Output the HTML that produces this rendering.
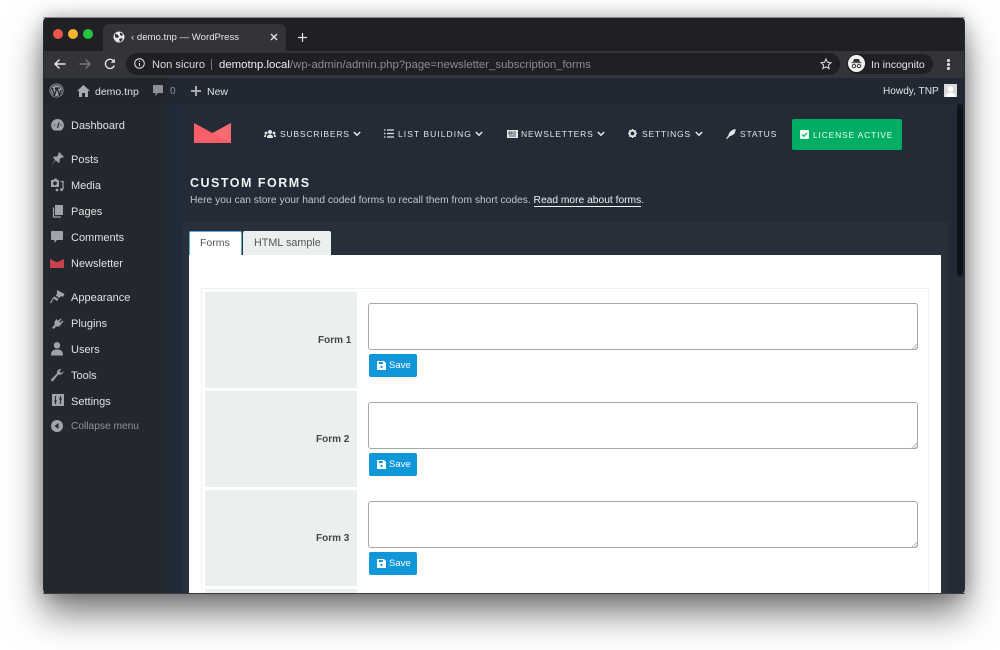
<!DOCTYPE html>
<html><head><meta charset="utf-8">
<style>
html,body{margin:0;padding:0;width:1000px;height:650px;overflow:hidden;background:#fff;font-family:"Liberation Sans",sans-serif}
body{filter:blur(.3px)}
.a,.t{position:absolute}
.t{white-space:nowrap;line-height:14px}
svg{position:absolute;overflow:visible}
#win{position:absolute;left:43px;top:17px;width:922px;height:577px;border-radius:5px;box-shadow:0 20px 36px rgba(0,0,0,.5),0 0 18px rgba(0,0,0,.25)}
#clip{position:absolute;left:43px;top:17px;width:922px;height:577px;border-radius:5px;overflow:hidden;background:#222b36}
.m{font-size:11px;color:#dfe1e3;left:71px}
.n{font-size:8.5px;letter-spacing:.8px;color:#e3e5e7;top:127px}
.f{font-size:10px;font-weight:bold;color:#444;}
.lab{left:205px;width:152px;height:96px;background:#ecefef}
.ta{left:368px;width:548px;height:45px;border:1px solid #a4a9ad;border-radius:3px;background:#fff}
.btn{left:369px;width:48px;height:23px;background:#0f97d9;border-radius:2px}
.sv{font-size:9.5px;color:#fff;left:389px}
</style></head><body>
<div id="win"></div>
<div id="clip"></div>
<div class="a" style="left:43px;top:17px;width:922px;height:1px;background:#8a8a8c;border-radius:5px 5px 0 0"></div>
<!-- tab strip -->
<div class="a" style="left:44px;top:18px;width:920px;height:33px;background:#1f2023;border-radius:4px 4px 0 0"></div>
<div class="a" style="left:103px;top:24px;width:183px;height:27px;background:#333437;border-radius:6px 6px 0 0"></div>
<div class="a" style="left:53px;top:29px;width:10px;height:10px;border-radius:50%;background:#f1544d"></div>
<div class="a" style="left:68px;top:29px;width:10px;height:10px;border-radius:50%;background:#f6b42c"></div>
<div class="a" style="left:83px;top:29px;width:10px;height:10px;border-radius:50%;background:#27c53f"></div>
<svg style="left:113px;top:31px" width="12" height="12" viewBox="0 0 12 12"><circle cx="6" cy="6" r="5.5" fill="#e6e6e6"/><path d="M2 2.5l3 1.5 1 2-2 1-2-1zM7 1.5l3 1.500-1 2-2-1zM6 8l3-1 .5 2-2.500 2z" fill="#333437"/></svg>
<div class="t" style="left:131px;top:31px;font-size:9.600px;color:#e6e6e6">‹ demo.tnp — WordPress</div>
<svg style="left:270px;top:33px" width="8" height="8" viewBox="0 0 8 8"><path d="M1 1l6 6M7 1l-6 6" stroke="#e6e6e6" stroke-width="1.300"/></svg>
<svg style="left:298px;top:33px" width="9" height="9" viewBox="0 0 9 9"><path d="M4.500 0v9M0 4.500h9" stroke="#e6e6e6" stroke-width="1.200"/></svg>
<!-- toolbar -->
<div class="a" style="left:44px;top:51px;width:920px;height:27px;background:#333437"></div>
<svg style="left:54px;top:58px" width="12" height="12" viewBox="0 0 12 12"><path d="M11.500 6H1M5.500 1.500L1 6l4.500 4.500" fill="none" stroke="#e8e8e8" stroke-width="1.400"/></svg>
<svg style="left:79px;top:58px" width="12" height="12" viewBox="0 0 12 12"><path d="M.5 6H11M6.500 1.500L11 6l-4.500 4.500" fill="none" stroke="#77787a" stroke-width="1.400"/></svg>
<svg style="left:104px;top:58px" width="12" height="12" viewBox="0 0 12 12"><path d="M10.300 7.500A4.600 4.600 0 1 1 9.600 3" fill="none" stroke="#e8e8e8" stroke-width="1.300"/><path d="M10.800 .8v4h-4z" fill="#e8e8e8"/></svg>
<div class="a" style="left:126px;top:53px;width:714px;height:22px;background:#1f2023;border-radius:11px"></div>
<svg style="left:134px;top:58px" width="11" height="11" viewBox="0 0 11 11"><circle cx="5.500" cy="5.500" r="4.800" fill="none" stroke="#e6e6e6"/><path d="M5.500 5v3M5.500 2.700v1.200" stroke="#e6e6e6"/></svg>
<div class="t" style="left:152px;top:58px;font-size:11.100px;color:#d8d8d8">Non sicuro</div>
<div class="a" style="left:211px;top:59px;width:1px;height:11px;background:#77787a"></div>
<div class="t" style="left:219px;top:58px;font-size:11.400px;color:#eee">demotnp.local<span style="color:#8b8c8e">/wp-admin/admin.php?page=newsletter_subscription_forms</span></div>
<svg style="left:820px;top:58px" width="12" height="12" viewBox="0 0 12 12"><path d="M6 1l1.500 3.300 3.500.4-2.600 2.400.7 3.500L6 8.800 2.900 10.600l.7-3.500L1 4.700l3.500-.4z" fill="none" stroke="#ddd" stroke-width="1"/></svg>
<div class="a" style="left:847px;top:54px;width:86px;height:20px;background:#1f2023;border-radius:10px"></div>
<div class="a" style="left:848px;top:55px;width:17px;height:17px;border-radius:50%;background:#f2f2f2"></div>
<svg style="left:851px;top:58px" width="11" height="11" viewBox="0 0 11 11"><path d="M3 1h5l1 3H2zM.5 4.300h10v.8H.5z" fill="#333"/><circle cx="3" cy="8" r="1.700" fill="none" stroke="#333"/><circle cx="8" cy="8" r="1.700" fill="none" stroke="#333"/></svg>
<div class="t" style="left:871px;top:58px;font-size:10.500px;color:#e6e6e6">In incognito</div>
<div class="a" style="left:947px;top:60px;width:2.500px;height:2.500px;border-radius:50%;background:#ddd;box-shadow:0 4px 0 #ddd,0 8px 0 #ddd;margin-top:-1px"></div>
<!-- admin bar -->
<div class="a" style="left:44px;top:78px;width:920px;height:26px;background:#22262c"></div>
<div class="a" style="left:167px;top:78px;width:797px;height:26px;background:#212833"></div>
<svg style="left:49px;top:83px" width="15" height="15" viewBox="0 0 15 15"><circle cx="7.500" cy="7.500" r="7" fill="#9da0a3"/><circle cx="7.500" cy="7.500" r="5.800" fill="none" stroke="#22262c" stroke-width=".8"/><path d="M3 5l2.500 7L7.300 7 6 5M6 5h5M8 5l2.500 7L12 7" fill="none" stroke="#22262c" stroke-width="1.300"/></svg>
<svg style="left:77px;top:85px" width="13" height="12" viewBox="0 0 13 12"><path d="M6.500 0L13 6h-2v6H8V8H5v4H2V6H0z" fill="#a8abae"/></svg>
<div class="t" style="left:95px;top:85px;font-size:10.500px;color:#dfe1e3">demo.tnp</div>
<svg style="left:152px;top:85px" width="12" height="12" viewBox="0 0 12 12"><path d="M1 0h10v8H6L3.500 11V8H1z" fill="#8f9295"/></svg>
<div class="t" style="left:170px;top:85px;font-size:10px;color:#8f9295">0</div>
<svg style="left:191px;top:86px" width="10" height="10" viewBox="0 0 10 10"><path d="M5 0v10M0 5h10" stroke="#a8abae" stroke-width="2"/></svg>
<div class="t" style="left:207px;top:85px;font-size:10.500px;color:#dfe1e3">New</div>
<div class="t" style="left:883px;top:85px;font-size:10.100px;color:#dfe1e3">Howdy, TNP</div>
<div class="a" style="left:944px;top:84px;width:13px;height:13px;background:#d9d9d9"></div>
<svg style="left:944px;top:84px" width="13" height="13" viewBox="0 0 13 13"><circle cx="6.500" cy="5" r="2.800" fill="#fff"/><path d="M2 13c0-3 2-4.500 4.500-4.500S11 10 11 13z" fill="#fff"/></svg>
<!-- sidebar -->
<div class="a" style="left:44px;top:104px;width:123px;height:489px;background:#23282e"></div>
<div class="a" style="left:167px;top:104px;width:16px;height:489px;background:#212b37"></div>
<div class="a" style="left:957px;top:104px;width:6px;height:172px;background:#0e1318;border-radius:3px"></div>
<div class="t m" style="top:119px">Dashboard</div>
<div class="t m" style="top:153px">Posts</div>
<div class="t m" style="top:179px">Media</div>
<div class="t m" style="top:205px">Pages</div>
<div class="t m" style="top:231px">Comments</div>
<div class="t m" style="top:257px">Newsletter</div>
<div class="t m" style="top:291px">Appearance</div>
<div class="t m" style="top:317px">Plugins</div>
<div class="t m" style="top:343px">Users</div>
<div class="t m" style="top:369px">Tools</div>
<div class="t m" style="top:395px">Settings</div>
<div class="t m" style="top:420px;color:#8f9498;font-size:10.200px">Collapse menu</div>
<!-- sidebar icons -->
<svg style="left:51px;top:119px" width="13" height="12" viewBox="0 0 13 12"><path d="M6.500 0a6.300 6.300 0 0 1 5 10.200L10 11.500H3L1.500 10.200A6.300 6.300 0 0 1 6.500 0z" fill="#a0a4a8"/><path d="M6.500 9L8 3.500M3 6h1M9.500 6h1" stroke="#23282e" stroke-width="1.200"/></svg>
<svg style="left:51px;top:152px" width="13" height="14" viewBox="0 0 13 14"><path d="M8 0l5 5-1.500.8-1-.3-2 2 .3 2.500L7.500 11 4.800 8.200 0 13.500l4-5.500L2 5.500l1-1 2.500.3 2-2-.3-1z" fill="#a0a4a8"/></svg>
<svg style="left:50px;top:178px" width="14" height="14" viewBox="0 0 14 14"><path d="M1 2h2.500l1-1.500h2l1 1.500H9v7H1z" fill="#a0a4a8"/><circle cx="5" cy="5.300" r="1.800" fill="#23282e"/><path d="M10.500 3.500h2.500v8" fill="none" stroke="#a0a4a8" stroke-width="1.300"/><circle cx="11.500" cy="11.700" r="1.400" fill="#a0a4a8"/><circle cx="7" cy="12" r="1.400" fill="#a0a4a8"/></svg>
<svg style="left:52px;top:205px" width="11" height="13" viewBox="0 0 11 13"><path d="M3 0h8v10H3z" fill="#a0a4a8"/><path d="M1.500 2.500v9.500H9" fill="none" stroke="#a0a4a8" stroke-width="1.200"/></svg>
<svg style="left:51px;top:231px" width="12" height="12" viewBox="0 0 12 12"><path d="M1 0h10a1 1 0 0 1 1 1v7a1 1 0 0 1-1 1H6L3.500 12V9H1a1 1 0 0 1-1-1V1a1 1 0 0 1 1-1z" fill="#a0a4a8"/></svg>
<svg style="left:50px;top:259px" width="14" height="9" viewBox="0 0 14 9"><path d="M0 0l7 3.200L14 0v9H0z" fill="#c9414c"/></svg>
<svg style="left:50px;top:290px" width="15" height="14" viewBox="0 0 15 14"><path d="M7 0l7.500 4-1.500 3L11 6 9.500 8 5.500 5.500 7 4zM4.500 6.500L8.500 9 7 11 3.500 8.500 1 13.500 0 12.500 3 7.500z" fill="#a0a4a8"/></svg>
<svg style="left:51px;top:317px" width="13" height="13" viewBox="0 0 13 13"><path d="M5.500 2l5 5-2.500 2.500H5L2.500 12 1 10.500 3.500 8V5zM7 4l2.500-2.500 1 1L8 5zM9 6l2.500-2.500 1 1L10 7z" fill="#a0a4a8"/></svg>
<svg style="left:51px;top:342px" width="12" height="14" viewBox="0 0 12 14"><circle cx="6" cy="3.300" r="3.200" fill="#a0a4a8"/><path d="M0 13.500c0-5 2.500-6 6-6s6 1 6 6z" fill="#a0a4a8"/></svg>
<svg style="left:51px;top:368px" width="13" height="14" viewBox="0 0 13 14"><path d="M12.500 3a3.800 3.800 0 0 1-5.200 3.500L2 13a1.300 1.300 0 0 1-1.800-1.800L6 5.500A3.800 3.800 0 0 1 10.500 1L8.500 3l.5 1.500 1.500.5z" fill="#a0a4a8"/></svg>
<svg style="left:52px;top:394px" width="12" height="12" viewBox="0 0 12 12"><path d="M0 0h12v12H0z" fill="#a0a4a8"/><path d="M3.500 2v5M2 7h3M3.500 7l0 3M8.500 10V5M7 5h3M8.500 5V2" stroke="#23282e" stroke-width="1.100"/></svg>
<svg style="left:51px;top:420px" width="12" height="12" viewBox="0 0 12 12"><circle cx="6" cy="6" r="6" fill="#a0a4a8"/><path d="M7.500 3v6L3.500 6z" fill="#23282e"/></svg>
<!-- logo and nav -->
<svg style="left:194px;top:123px" width="37" height="20" viewBox="0 0 37 20"><path d="M0 0l18.500 10L37 0v20H0z" fill="#f85f68"/><path d="M18.500 10L37 0v20z" fill="#fb6a72"/></svg>
<svg style="left:264px;top:130px" width="12" height="8" viewBox="0 0 12 8"><circle cx="6" cy="2" r="2" fill="#e3e5e7"/><circle cx="2" cy="3" r="1.400" fill="#e3e5e7"/><circle cx="10" cy="3" r="1.400" fill="#e3e5e7"/><path d="M3 8c0-2.500 1-3.500 3-3.500S9 5.500 9 8zM0 7c0-1.800.8-2.500 2-2.500V7zM12 7c0-1.800-.8-2.500-2-2.500V7z" fill="#e3e5e7"/></svg>
<div class="t n" style="left:280px">SUBSCRIBERS</div>
<svg class="c" style="left:353px;top:131px" width="8" height="6" viewBox="0 0 8 6"><path d="M.8 1L4 4.200 7.200 1" fill="none" stroke="#e3e5e7" stroke-width="1.500"/></svg>
<svg style="left:384px;top:129px" width="10" height="9" viewBox="0 0 10 9"><path d="M3 1h7M3 4.500h7M3 8h7M0 1h1.500M0 4.500h1.500M0 8h1.500" stroke="#e3e5e7" stroke-width="1.200"/></svg>
<div class="t n" style="left:398px;letter-spacing:1.050px">LIST BUILDING</div>
<svg style="left:475px;top:131px" width="8" height="6" viewBox="0 0 8 6"><path d="M.8 1L4 4.200 7.200 1" fill="none" stroke="#e3e5e7" stroke-width="1.500"/></svg>
<svg style="left:507px;top:130px" width="11" height="8" viewBox="0 0 11 8"><path d="M0 0h11v8H0z" fill="#e3e5e7"/><path d="M2 2h3v2H2zM6 2h3M6 4h3M2 6h7" stroke="#222b36" stroke-width=".8" fill="none"/></svg>
<div class="t n" style="left:521px">NEWSLETTERS</div>
<svg style="left:597px;top:131px" width="8" height="6" viewBox="0 0 8 6"><path d="M.8 1L4 4.200 7.200 1" fill="none" stroke="#e3e5e7" stroke-width="1.500"/></svg>
<svg style="left:628px;top:129px" width="9" height="9" viewBox="0 0 9 9"><circle cx="4.500" cy="4.500" r="2.900" fill="none" stroke="#e3e5e7" stroke-width="2"/><path d="M4.500 0v9M0 4.500h9M1.300 1.300l6.400 6.400M7.700 1.300L1.300 7.700" stroke="#e3e5e7" stroke-width="1.200" stroke-dasharray="1.600 5.800"/></svg>
<div class="t n" style="left:642px">SETTINGS</div>
<svg style="left:695px;top:131px" width="8" height="6" viewBox="0 0 8 6"><path d="M.8 1L4 4.200 7.200 1" fill="none" stroke="#e3e5e7" stroke-width="1.500"/></svg>
<svg style="left:726px;top:129px" width="10" height="10" viewBox="0 0 10 10"><path d="M9.500 0C10 3 8 6.500 4 7L1 10H0l2.500-4C3 3 6 .5 9.500 0z" fill="#e3e5e7"/></svg>
<div class="t n" style="left:740px">STATUS</div>
<div class="a" style="left:792px;top:119px;width:110px;height:31px;background:#00ae63;border-radius:2px"></div>
<svg style="left:800px;top:130px" width="9" height="9" viewBox="0 0 9 9"><rect width="9" height="9" rx="1" fill="#f0faf5"/><path d="M2 4.500l1.800 1.800L7 3" fill="none" stroke="#00ae63" stroke-width="1.200"/></svg>
<div class="t n" style="left:813px;top:128px;color:#eefaf4">LICENSE ACTIVE</div>
<!-- heading -->
<div class="t" style="left:190px;top:176px;font-size:12.500px;letter-spacing:1.500px;font-weight:bold;color:#f2f3f4">CUSTOM FORMS</div>
<div class="t" style="left:190px;top:194px;font-size:10.250px;color:#c3c7ca">Here you can store your hand coded forms to recall them from short codes. <span style="color:#f0f1f2;border-bottom:1px solid #f0f1f2">Read more about forms</span>.</div>
<!-- tab panel -->
<div class="a" style="left:183px;top:222px;width:765px;height:371px;background:#27303b"></div>
<div class="a" style="left:189px;top:231px;width:51px;height:24px;background:#fff;border:1px solid #5fa9d6;border-radius:2px 2px 0 0"></div>
<div class="a" style="left:243px;top:231px;width:88px;height:25px;background:#ecefef;border-radius:2px 2px 0 0"></div>
<div class="t" style="left:200px;top:236px;font-size:10.500px;color:#555">Forms</div>
<div class="t" style="left:254px;top:236px;font-size:10.800px;color:#555">HTML sample</div>
<div class="a" style="left:189px;top:255px;width:752px;height:338px;background:#fff"></div>
<div class="a" style="left:201px;top:288px;width:728px;height:305px;border:1px solid #eef0f0;border-bottom:0;box-sizing:border-box"></div>
<!-- rows -->
<div class="a lab" style="top:292px"></div>
<div class="a lab" style="top:391px"></div>
<div class="a lab" style="top:490px"></div>
<div class="a lab" style="top:589px;height:4px"></div>
<div class="t f" style="left:318px;top:334px">Form 1</div>
<div class="t f" style="left:316px;top:433px">Form 2</div>
<div class="t f" style="left:316px;top:532px">Form 3</div>
<div class="a ta" style="top:303px"></div>
<div class="a ta" style="top:402px"></div>
<div class="a ta" style="top:501px"></div>
<svg style="left:911px;top:343px" width="7" height="7" viewBox="0 0 7 7"><path d="M1 6l5-5M4 6l2-2" stroke="#a4a9ad" stroke-width=".8"/></svg>
<svg style="left:911px;top:442px" width="7" height="7" viewBox="0 0 7 7"><path d="M1 6l5-5M4 6l2-2" stroke="#a4a9ad" stroke-width=".8"/></svg>
<svg style="left:911px;top:541px" width="7" height="7" viewBox="0 0 7 7"><path d="M1 6l5-5M4 6l2-2" stroke="#a4a9ad" stroke-width=".8"/></svg>
<div class="a btn" style="top:354px"></div>
<div class="a btn" style="top:453px"></div>
<div class="a btn" style="top:552px"></div>
<svg style="left:377px;top:361px" width="9" height="9" viewBox="0 0 9 9"><path d="M0 0h7l2 2v7H0z" fill="#fff"/><path d="M1.800 1h4v2h-4z" fill="#0f97d9"/><circle cx="4.500" cy="6" r="1.100" fill="#0f97d9"/></svg>
<svg style="left:377px;top:460px" width="9" height="9" viewBox="0 0 9 9"><path d="M0 0h7l2 2v7H0z" fill="#fff"/><path d="M1.800 1h4v2h-4z" fill="#0f97d9"/><circle cx="4.500" cy="6" r="1.100" fill="#0f97d9"/></svg>
<svg style="left:377px;top:559px" width="9" height="9" viewBox="0 0 9 9"><path d="M0 0h7l2 2v7H0z" fill="#fff"/><path d="M1.800 1h4v2h-4z" fill="#0f97d9"/><circle cx="4.500" cy="6" r="1.100" fill="#0f97d9"/></svg>
<div class="t sv" style="top:359px">Save</div>
<div class="t sv" style="top:458px">Save</div>
<div class="t sv" style="top:557px">Save</div>
<div class="a" style="left:43px;top:593px;width:922px;height:1px;background:#3a3d40;border-radius:0 0 4px 4px"></div>
</body></html>
